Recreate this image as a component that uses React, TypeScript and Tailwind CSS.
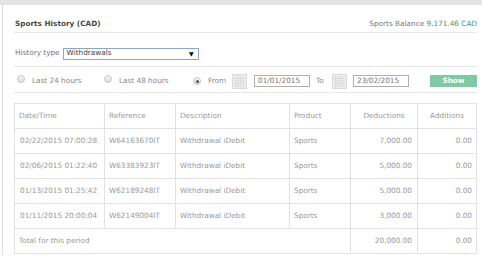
import React from "react";

const rows = [
  ["02/22/2015 07:00:28", "W64163670IT", "Withdrawal iDebit", "Sports", "7,000.00", "0.00"],
  ["02/06/2015 01:22:40", "W63383923IT", "Withdrawal iDebit", "Sports", "5,000.00", "0.00"],
  ["01/13/2015 01:25:42", "W62189248IT", "Withdrawal iDebit", "Sports", "5,000.00", "0.00"],
  ["01/11/2015 20:00:04", "W62149004IT", "Withdrawal iDebit", "Sports", "3,000.00", "0.00"],
];

function Radio({ checked }: { checked?: boolean }) {
  return (
    <span className="shrink-0 inline-flex w-[8px] h-[8px] rounded-full border border-[#c8c8c8] bg-gradient-to-b from-[#f6f6f6] to-[#dcdcdc] items-center justify-center">
      {checked && <span className="w-[3px] h-[3px] rounded-full bg-[#555]" />}
    </span>
  );
}

function Cal() {
  return (
    <svg width="15" height="15" viewBox="0 0 15 15" className="block">
      <rect x="0.5" y="0.5" width="14" height="14" fill="#efefef" stroke="#dadada" />
      {[3.5, 6, 8.5, 11].map((x) => (
        <line key={"v" + x} x1={x} y1="2" x2={x} y2="13" stroke="#dcdcdc" strokeWidth="1" />
      ))}
      {[4.5, 7, 9.5, 12].map((y) => (
        <line key={"h" + y} x1="2" y1={y} x2="13" y2={y} stroke="#dcdcdc" strokeWidth="1" />
      ))}
    </svg>
  );
}

const cell = "border border-[#e2e2e2]";

export default function App() {
  const font = { fontFamily: '"DejaVu Sans", Verdana, sans-serif' };
  return (
    <div className="w-[482px] h-[280px] bg-white text-[7.3px] text-[#888] whitespace-nowrap" style={font}>
      <div className="h-[5px] bg-[#e4e4e4]" />
      <div className="ml-[2px] border-l border-[#dcdcdc] pl-[11px] pr-[5px] pb-[1px]">
        <div className="h-[28px] flex items-center justify-between border-b border-[#e6e6e6] pt-[11px] pl-[1px]">
          <span className="font-bold text-[#4a4a4a]">Sports History (CAD)</span>
          <span className="text-[#777]">
            Sports Balance <span className="text-[#3c9c6c]">9,171.46 CAD</span>
          </span>
        </div>
        <div className="h-[34px] flex items-center border-b border-[#e6e6e6] pt-[8px] pl-[1px]">
          <span className="mr-[3px] text-[#777]">History type</span>
          <div className="w-[136px] h-[12px] border border-[#8aa6c8] flex items-center justify-between pl-[3px] pr-[4px] text-[#444]">
            <span>Withdrawals</span>
            <span className="text-[6px] text-black">▼</span>
          </div>
        </div>
        <div className="h-[26px] flex items-center border-b border-[#e6e6e6] pt-[3px]">
          <span className="ml-[3px]"><Radio /></span>
          <span className="ml-[7px] w-[50px]">Last 24 hours</span>
          <span className="ml-[22px]"><Radio /></span>
          <span className="ml-[7px] w-[50px]">Last 48 hours</span>
          <span className="ml-[24px]"><Radio checked /></span>
          <span className="ml-[7px] w-[18px]">From</span>
          <span className="ml-[6px] shrink-0"><Cal /></span>
          <div className="ml-[7px] shrink-0 w-[56px] h-[12px] border border-[#b0b0b0] flex items-center pl-[3px] text-[#777]">01/01/2015</div>
          <span className="ml-[6px] w-[10px]">To</span>
          <span className="ml-[6px] shrink-0"><Cal /></span>
          <div className="ml-[6px] shrink-0 w-[56px] h-[12px] border border-[#b0b0b0] flex items-center pl-[3px] text-[#777]">23/02/2015</div>
          <div className="ml-auto shrink-0 w-[47px] h-[12px] bg-[#7fc9a5] text-white font-bold flex items-center justify-center">Show</div>
        </div>
        <table className="mt-[10px] w-[462px] border-collapse text-[#999] table-fixed">
          <colgroup>
            <col className="w-[90px]" />
            <col className="w-[71px]" />
            <col className="w-[114px]" />
            <col className="w-[61px]" />
            <col className="w-[67px]" />
            <col className="w-[59px]" />
          </colgroup>
          <thead>
            <tr className="h-[25px]">
              <td className={`${cell} pl-[4px]`}>Date/Time</td>
              <td className={`${cell} pl-[4px]`}>Reference</td>
              <td className={`${cell} pl-[4px]`}>Description</td>
              <td className={`${cell} pl-[4px]`}>Product</td>
              <td className={`${cell} text-center`}>Deductions</td>
              <td className={`${cell} text-center`}>Additions</td>
            </tr>
          </thead>
          <tbody>
            {rows.map((r, i) => (
              <tr key={i} className="h-[25px]">
                <td className={`${cell} pl-[5px]`}>{r[0]}</td>
                <td className={`${cell} pl-[4px]`}>{r[1]}</td>
                <td className={`${cell} pl-[4px]`}>{r[2]}</td>
                <td className={`${cell} pl-[4px]`}>{r[3]}</td>
                <td className={`${cell} text-right pr-[5px]`}>{r[4]}</td>
                <td className={`${cell} text-right pr-[4px]`}>{r[5]}</td>
              </tr>
            ))}
            <tr className="h-[25px]">
              <td colSpan={4} className={`${cell} pl-[4px]`}>Total for this period</td>
              <td className={`${cell} text-right pr-[5px]`}>20,000.00</td>
              <td className={`${cell} text-right pr-[4px]`}>0.00</td>
            </tr>
          </tbody>
        </table>
      </div>
    </div>
  );
}
